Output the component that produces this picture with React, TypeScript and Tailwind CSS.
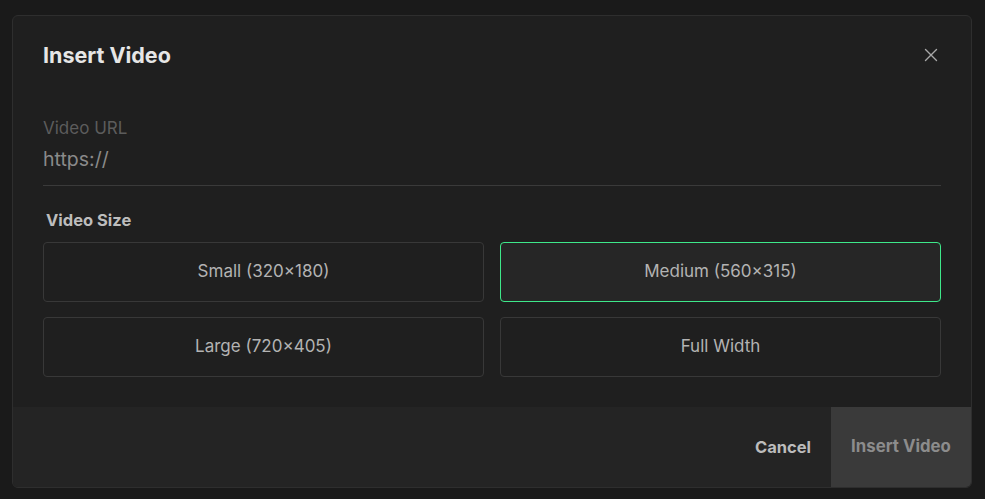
import React from "react";

const sizes = [
  { label: "Small (320×180)", selected: false },
  { label: "Medium (560×315)", selected: true },
  { label: "Large (720×405)", selected: false },
  { label: "Full Width", selected: false },
];

export default function App() {
  return (
    <div
      className="w-[985px] h-[499px] bg-[#1a1a1a] pt-[15px] pl-[12px] overflow-hidden"
      style={{ fontFamily: "Inter, 'Noto Sans', sans-serif" }}
    >
      <div className="w-[960px] h-[473px] bg-[#1f1f1f] border border-[#2e2e2e] rounded-[6px] flex flex-col overflow-hidden">
        <div className="flex items-start justify-between px-[30px] pt-[24px]">
          <h2 className="text-[21.5px] leading-[30px] font-bold text-[#e6e6e6]">Insert Video</h2>
          <button className="mt-[4px] mr-[-1px] text-[#a8a8a8]">
            <svg width="22" height="22" viewBox="0 0 24 24" fill="none" stroke="currentColor" strokeWidth="1.5" strokeLinecap="round">
              <path d="M18 6L6 18M6 6l12 12" />
            </svg>
          </button>
        </div>
        <div className="px-[30px] pt-[45px] flex-1">
          <div className="border-b border-[#3a3a3a] pb-[12px]">
            <div className="text-[17px] leading-[26px] text-[#5c5c5c]">Video URL</div>
            <div className="text-[19.5px] leading-[28px] mt-[4px] text-[#8a8a8a]">https://</div>
          </div>
          <div className="mt-[22px] pl-[3px] text-[16.5px] leading-[24px] font-bold text-[#bdbdbd]">Video Size</div>
          <div className="mt-[10px] grid grid-cols-2 gap-x-[16px] gap-y-[15px]">
            {sizes.map((s) => (
              <button
                key={s.label}
                className={
                  s.selected
                    ? "h-[60px] rounded-[4px] border border-[#3ee88a] bg-[#262626] text-[17px] text-[#b3b3b3]"
                    : "h-[60px] rounded-[4px] border border-[#383838] bg-[#1f1f1f] text-[17px] text-[#b3b3b3]"
                }
              >
                {s.label}
              </button>
            ))}
          </div>
        </div>
        <div className="h-[80px] bg-[#242424] flex items-stretch justify-end">
          <button className="px-[20px] text-[16.5px] font-bold text-[#bcbcbc]">Cancel</button>
          <button className="w-[140px] bg-[#3a3a3a] text-[16.8px] font-bold text-[#8c8c8c]">Insert Video</button>
        </div>
      </div>
    </div>
  );
}
